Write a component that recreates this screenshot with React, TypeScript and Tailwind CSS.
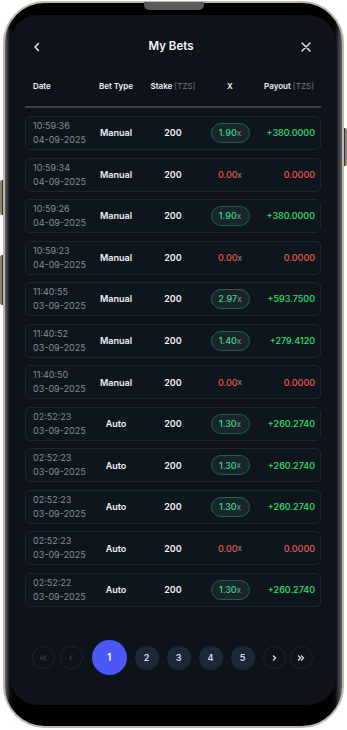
import React from "react";

type Bet = {
  time: string;
  date: string;
  type: string;
  stake: number;
  mult: string;
  payout: string;
};

const bets: Bet[] = [
  { time: "10:59:36", date: "04-09-2025", type: "Manual", stake: 200, mult: "1.90", payout: "+380.0000" },
  { time: "10:59:34", date: "04-09-2025", type: "Manual", stake: 200, mult: "0.00", payout: "0.0000" },
  { time: "10:59:26", date: "04-09-2025", type: "Manual", stake: 200, mult: "1.90", payout: "+380.0000" },
  { time: "10:59:23", date: "04-09-2025", type: "Manual", stake: 200, mult: "0.00", payout: "0.0000" },
  { time: "11:40:55", date: "03-09-2025", type: "Manual", stake: 200, mult: "2.97", payout: "+593.7500" },
  { time: "11:40:52", date: "03-09-2025", type: "Manual", stake: 200, mult: "1.40", payout: "+279.4120" },
  { time: "11:40:50", date: "03-09-2025", type: "Manual", stake: 200, mult: "0.00", payout: "0.0000" },
  { time: "02:52:23", date: "03-09-2025", type: "Auto", stake: 200, mult: "1.30", payout: "+260.2740" },
  { time: "02:52:23", date: "03-09-2025", type: "Auto", stake: 200, mult: "1.30", payout: "+260.2740" },
  { time: "02:52:23", date: "03-09-2025", type: "Auto", stake: 200, mult: "1.30", payout: "+260.2740" },
  { time: "02:52:23", date: "03-09-2025", type: "Auto", stake: 200, mult: "0.00", payout: "0.0000" },
  { time: "02:52:22", date: "03-09-2025", type: "Auto", stake: 200, mult: "1.30", payout: "+260.2740" },
];

function BetRow({ bet }: { bet: Bet }) {
  const won = bet.mult !== "0.00";
  return (
    <div className="h-[34px] rounded-[5px] border border-[#1c2632] bg-[#0f151d] grid grid-cols-[54px_58px_56px_58px_1fr] items-center pl-[7px] pr-[5px]">
      <div className="flex flex-col text-[9px] leading-[14px] text-[#858d97]">
        <span>{bet.time}</span>
        <span>{bet.date}</span>
      </div>
      <div className="text-center text-[9px] font-semibold text-[#eef1f6]">{bet.type}</div>
      <div className="text-center text-[9px] font-semibold text-[#eef1f6]">{bet.stake}</div>
      <div className="flex justify-center">
        {won ? (
          <div className="w-[39px] h-[20px] rounded-full border border-[#1f6049] bg-[#17262a] flex items-center justify-center text-[9px] font-medium">
            <span className="text-[#3fd98a]">{bet.mult}</span>
            <span className="text-[#7c8590] text-[8px]">x</span>
          </div>
        ) : (
          <div className="flex items-center text-[9px] font-medium">
            <span className="text-[#f0544c]">{bet.mult}</span>
            <span className="text-[#7c8590] text-[8px]">x</span>
          </div>
        )}
      </div>
      <div className={"text-right text-[9px] font-medium " + (won ? "text-[#2fe06e]" : "text-[#f0544c]")}>
        {bet.payout}
      </div>
    </div>
  );
}

function Pager() {
  const arrow =
    "w-[23px] h-[23px] rounded-full border border-[#1b2430] flex items-center justify-center text-[#8a939e]";
  const num =
    "w-[24px] h-[24px] rounded-full bg-[#1c2838] flex items-center justify-center text-[9px] font-semibold text-[#d6dde7]";
  return (
    <div className="flex items-center justify-center ml-[-2px]">
      <div className={arrow}>
        <svg width="8" height="8" viewBox="0 0 8 8" fill="none" stroke="#4d5663" strokeWidth="1">
          <path d="M4 1.5 1.5 4 4 6.5M7 1.5 4.5 4 7 6.5" />
        </svg>
      </div>
      <div className={arrow + " ml-[5px]"}>
        <svg width="6" height="8" viewBox="0 0 6 8" fill="none" stroke="#4d5663" strokeWidth="1">
          <path d="M4 1.5 1.5 4 4 6.5" />
        </svg>
      </div>
      <div className="ml-[9px] w-[35px] h-[35px] rounded-full bg-[#4c58f5] flex items-center justify-center text-[10px] font-semibold text-white">
        1
      </div>
      <div className={num + " ml-[8px]"}>2</div>
      <div className={num + " ml-[8px]"}>3</div>
      <div className={num + " ml-[8px]"}>4</div>
      <div className={num + " ml-[8px]"}>5</div>
      <div className={arrow + " ml-[8px]"}>
        <svg width="6" height="8" viewBox="0 0 6 8" fill="none" stroke="#d6dde7" strokeWidth="1.3">
          <path d="M2 1.5 4.5 4 2 6.5" />
        </svg>
      </div>
      <div className={arrow + " ml-[4px]"}>
        <svg width="8" height="8" viewBox="0 0 8 8" fill="none" stroke="#d6dde7" strokeWidth="1.3">
          <path d="M1 1.5 3.5 4 1 6.5M4 1.5 6.5 4 4 6.5" />
        </svg>
      </div>
    </div>
  );
}

export default function App() {
  return (
    <div className="relative w-[347px] h-[730px] bg-white overflow-hidden pl-[3px] pr-[3px] pt-[1px] pb-[2px] font-['Inter',sans-serif]">
      {/* side buttons */}
      <div className="absolute left-0 top-[180px] w-[3px] h-[35px] rounded-l-[2px] bg-[#8f8378] border-r border-[#3a322c]" />
      <div className="absolute left-0 top-[255px] w-[3px] h-[50px] rounded-l-[2px] bg-[#8f8378] border-r border-[#3a322c]" />
      <div className="absolute right-0 top-[128px] w-[3px] h-[38px] rounded-r-[2px] bg-[#8f8378] border-l border-[#3a322c]" />

      <div className="relative h-full rounded-[42px] border-2 border-[#c2b5a8] bg-[linear-gradient(to_right,#60656b_0px,#2b3036_3px,#0c0f12_5px,#000_10px,#000_calc(100%_-_10px),#0c0f12_calc(100%_-_6px),#2b3036_calc(100%_-_4px),#60656b_100%)] pl-[5px] pr-[6px] pt-[12px] pb-[21px]">
        {/* speaker */}
        <div className="absolute left-1/2 -translate-x-1/2 top-[-1px] w-[60px] h-[8px] rounded-b-[5px] bg-[#161819] bg-[radial-gradient(#5c5f63_0.7px,transparent_0.9px)] bg-[length:2px_2px]" />

        <div className="h-full rounded-[28px] bg-[#0e131a] overflow-hidden px-[15px] flex flex-col">
          {/* header */}
          <div className="h-[64px] shrink-0 flex items-center justify-between pl-[8px] pr-[10px]">
            <svg width="8" height="10" viewBox="0 0 8 10" fill="none" stroke="#e6e9ee" strokeWidth="1.5" strokeLinecap="round" strokeLinejoin="round">
              <path d="M5.5 1.5 2 5l3.5 3.5" />
            </svg>
            <span className="text-[11.5px] font-semibold text-[#f1f3f6]">My Bets</span>
            <svg width="10" height="10" viewBox="0 0 10 10" fill="none" stroke="#e6e9ee" strokeWidth="1.4" strokeLinecap="round">
              <path d="M1 1l8 8M9 1 1 9" />
            </svg>
          </div>

          {/* column heads */}
          <div className="h-[14px] shrink-0 grid grid-cols-[54px_58px_56px_58px_1fr] items-center pl-[8px] pr-[7px] text-[8px] font-semibold text-[#eef1f6]">
            <span>Date</span>
            <span className="text-center">Bet Type</span>
            <span className="text-center whitespace-nowrap">
              Stake <span className="font-normal text-[#6f7883]">[TZS]</span>
            </span>
            <span className="text-center">X</span>
            <span className="text-right whitespace-nowrap">
              Payout <span className="font-normal text-[#6f7883]">[TZS]</span>
            </span>
          </div>

          <div className="mt-[13px] h-[2px] shrink-0 bg-[#38414c]" />

          <div className="mt-[8px] flex flex-col gap-[7.55px]">
            {bets.map((b, i) => (
              <BetRow key={i} bet={b} />
            ))}
          </div>

          <div className="mt-[33px]">
            <Pager />
          </div>
        </div>
      </div>
    </div>
  );
}
